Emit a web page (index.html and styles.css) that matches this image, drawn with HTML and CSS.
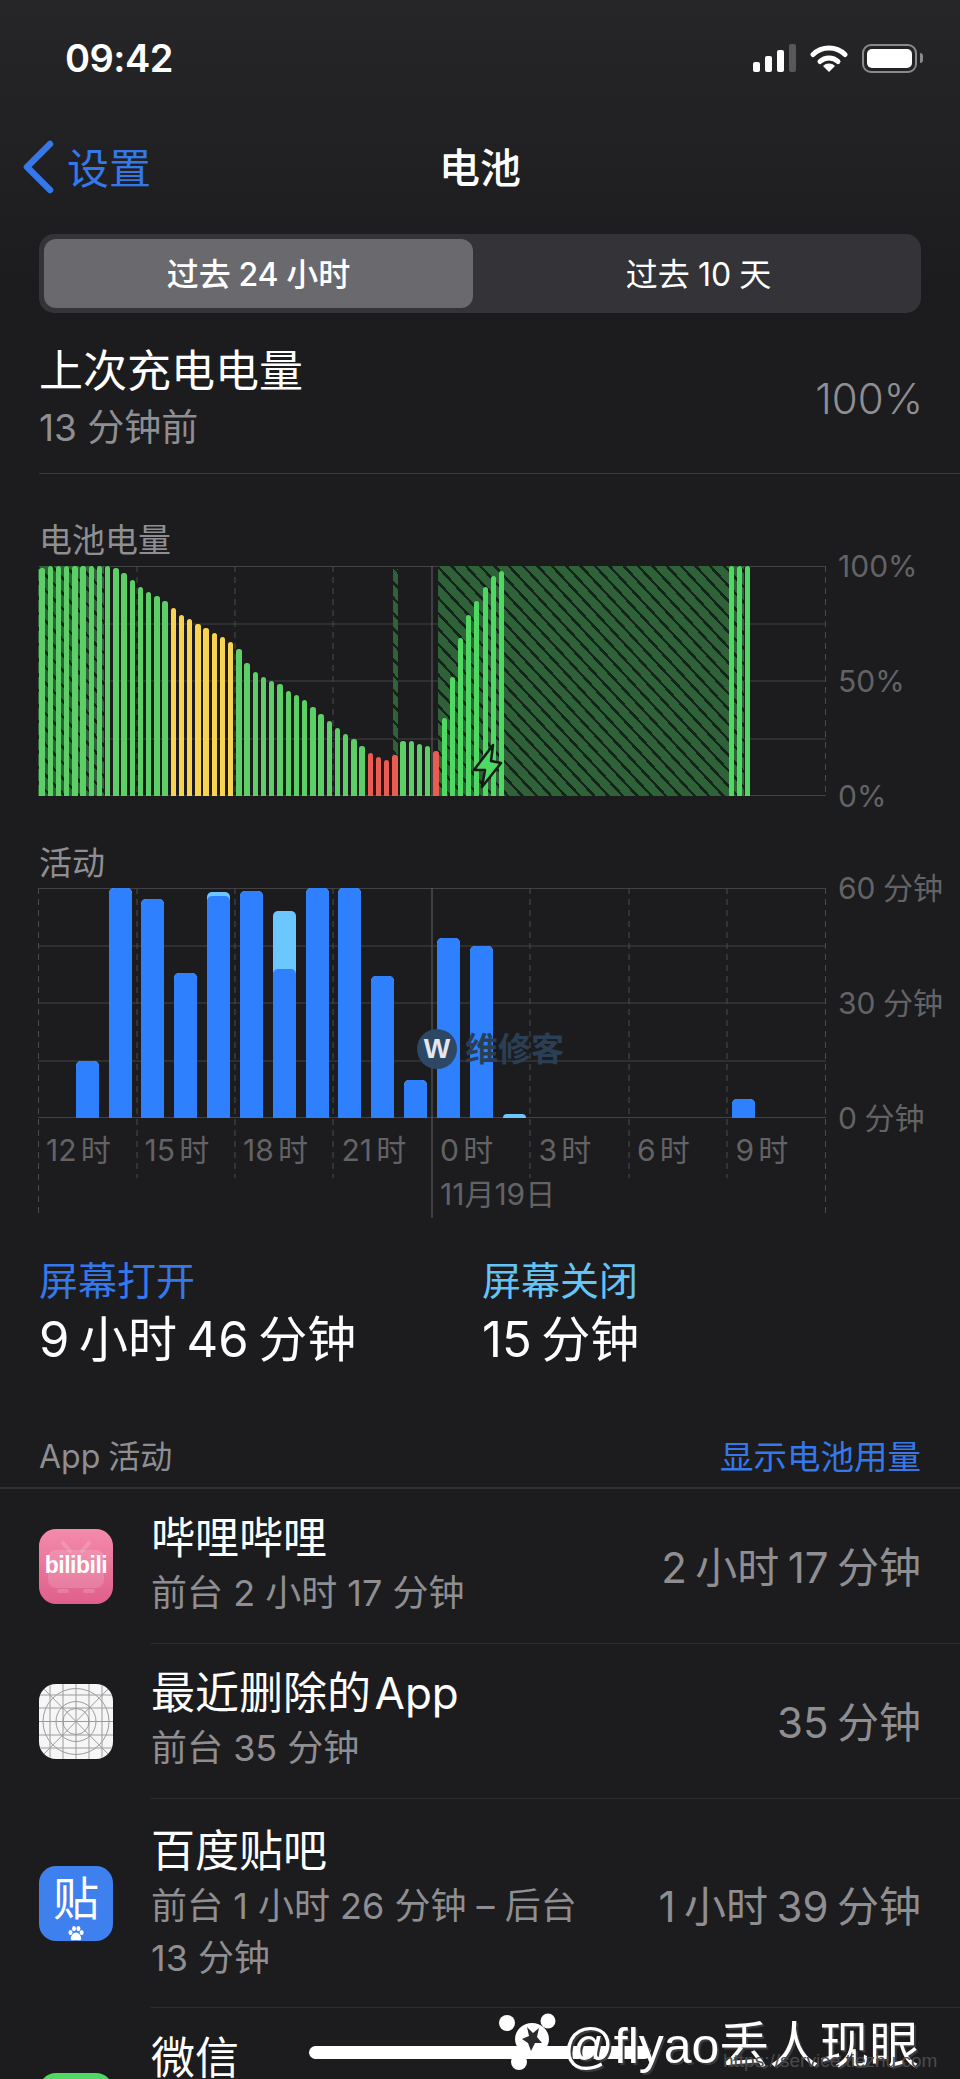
FILE: index.html

```html
<!DOCTYPE html>
<html lang="zh">
<head>
    <title>电池</title>
    <meta charset="UTF-8">
    <meta name="viewport" content="width=device-width, initial-scale=1.0">
    <link rel="stylesheet" href="styles.css">
</head>
<body>
    <div class="screen">
        <div class="status">
            <span class="time">09:42</span>
            <div class="status-icons">
                <svg class="signal" width="44" height="28" viewBox="0 0 44 28">
                    <rect x="1" y="18" width="7" height="10" rx="2" fill="#fff"/>
                    <rect x="13" y="12" width="7" height="16" rx="2" fill="#fff"/>
                    <rect x="25" y="6" width="7" height="22" rx="2" fill="#fff"/>
                    <rect x="37" y="0" width="7" height="28" rx="2" fill="#58585a"/>
                </svg>
                <svg class="wifi" width="38" height="28" viewBox="0 0 38 28">
                    <path d="M3 10.5A23 23 0 0 1 35 10.5" fill="none" stroke="#fff" stroke-width="5" stroke-linecap="round"/>
                    <path d="M10 17.5A13 13 0 0 1 28 17.5" fill="none" stroke="#fff" stroke-width="5" stroke-linecap="round"/>
                    <path d="M19 28L13 22A8.5 8.5 0 0 1 25 22Z" fill="#fff"/>
                </svg>
                <div class="battery"><div class="battery-fill"></div></div>
            </div>
        </div>

        <div class="nav">
            <a class="back">
                <svg width="32" height="54" viewBox="0 0 32 54"><polyline points="28,4 5,27 28,50" fill="none" stroke="#3478ea" stroke-width="6.5" stroke-linecap="round" stroke-linejoin="round"/></svg>
                <span>设置</span>
            </a>
            <div class="nav-title">电池</div>
        </div>

        <div class="segment">
            <div class="segment-item active">过去 24 小时</div>
            <div class="segment-item">过去 10 天</div>
        </div>

        <div class="last-charge">
            <div>
                <div class="last-title">上次充电电量</div>
                <div class="last-sub">13 分钟前</div>
            </div>
            <div class="last-value">100%</div>
        </div>

        <div class="chart-label level-label">电池电量</div>
        <div class="chart-row">
            <div class="plot">
                <svg class="grid-lines" width="788" height="230" viewBox="0 0 788 230">
                    <path d="M0 .5H788M0 58H788M0 115H788M0 173H788M0 229.5H788" stroke="#424244" fill="none"/>
                    <path d="M.5 0V230M99 0V230M197 0V230M295 0V230M492 0V230M591 0V230M689 0V230M787.5 0V230" stroke="#4a4a4c" stroke-dasharray="6 5" fill="none"/>
                    <path d="M394 0V230" stroke="#636366" fill="none"/>
                </svg>
                <div class="hatch hatch-a"></div>
                <div class="hatch hatch-b"></div>
                <div class="hatch hatch-c"></div>
                <div class="level-bars">
                    <i class="g" style="height:228px"></i><i class="g" style="height:230px"></i><i class="g" style="height:230px"></i><i class="g" style="height:230px"></i>
                    <i class="g" style="height:230px"></i><i class="g" style="height:230px"></i><i class="g" style="height:230px"></i><i class="g" style="height:230px"></i>
                    <i class="g" style="height:230px"></i><i class="g" style="height:228px"></i><i class="g" style="height:223px"></i><i class="g" style="height:216px"></i>
                    <i class="g" style="height:209px"></i><i class="g" style="height:204px"></i><i class="g" style="height:200px"></i><i class="g" style="height:195px"></i>
                    <i class="y" style="height:188px"></i><i class="y" style="height:181px"></i><i class="y" style="height:177px"></i><i class="y" style="height:172px"></i>
                    <i class="y" style="height:168px"></i><i class="y" style="height:163px"></i><i class="y" style="height:159px"></i><i class="y" style="height:154px"></i>
                    <i class="g" style="height:147px"></i><i class="g" style="height:133px"></i><i class="g" style="height:124px"></i><i class="g" style="height:119px"></i>
                    <i class="g" style="height:115px"></i><i class="g" style="height:112px"></i><i class="g" style="height:105px"></i><i class="g" style="height:101px"></i>
                    <i class="g" style="height:96px"></i><i class="g" style="height:89px"></i><i class="g" style="height:82px"></i><i class="g" style="height:75px"></i>
                    <i class="g" style="height:68px"></i><i class="g" style="height:62px"></i><i class="g" style="height:57px"></i><i class="g" style="height:50px"></i>
                    <i class="r" style="height:43px"></i><i class="r" style="height:39px"></i><i class="r" style="height:36px"></i><i class="r" style="height:41px"></i>
                    <i class="g" style="height:55px"></i><i class="g" style="height:55px"></i><i class="g" style="height:52px"></i><i class="g" style="height:50px"></i>
                    <i class="r" style="height:45px"></i><i class="c" style="height:78px"></i><i class="c" style="height:119px"></i><i class="c" style="height:158px"></i>
                    <i class="c" style="height:181px"></i><i class="c" style="height:195px"></i><i class="c" style="height:209px"></i><i class="c" style="height:220px"></i>
                    <i class="c" style="height:225px"></i>
                    <i class="c late" style="height:230px"></i><i class="c" style="height:230px"></i><i class="c" style="height:230px"></i>
                </div>
                <svg class="bolt" width="32" height="47" viewBox="0 0 32 47">
                    <polygon points="21,2 2,27 13,27 10,44 29,20 19,18" fill="#4cd964" stroke="#161a17" stroke-width="2.5" stroke-linejoin="round"/>
                </svg>
            </div>
            <div class="axis-right">
                <span>100%</span>
                <span>50%</span>
                <span>0%</span>
            </div>
        </div>

        <div class="chart-label activity-label">活动</div>
        <div class="chart-row">
            <div class="plot">
                <svg class="grid-lines" width="788" height="330" viewBox="0 0 788 330">
                    <path d="M0 .5H788M0 58H788M0 115H788M0 173H788M0 229.5H788" stroke="#424244" fill="none"/>
                    <path d="M.5 0V330M787.5 0V330M99 0V290M197 0V290M295 0V290M492 0V290M591 0V290M689 0V290" stroke="#4a4a4c" stroke-dasharray="6 5" fill="none"/>
                    <path d="M394 0V330" stroke="#636366" fill="none"/>
                </svg>
                <div class="activity-bars">
                    <div class="hour first" style="height:57px"><i style="height:100%"></i></div>
                    <div class="hour" style="height:230px"><i style="height:100%"></i></div>
                    <div class="hour" style="height:219px"><i style="height:100%"></i></div>
                    <div class="hour" style="height:145px"><i style="height:100%"></i></div>
                    <div class="hour" style="height:226px"><i style="height:222px"></i></div>
                    <div class="hour" style="height:227px"><i style="height:100%"></i></div>
                    <div class="hour" style="height:207px"><i style="height:149px"></i></div>
                    <div class="hour" style="height:230px"><i style="height:100%"></i></div>
                    <div class="hour" style="height:230px"><i style="height:100%"></i></div>
                    <div class="hour" style="height:142px"><i style="height:100%"></i></div>
                    <div class="hour" style="height:38px"><i style="height:100%"></i></div>
                    <div class="hour" style="height:180px"><i style="height:100%"></i></div>
                    <div class="hour" style="height:172px"><i style="height:100%"></i></div>
                    <div class="hour" style="height:4px"></div>
                    <div class="hour morning" style="height:19px"><i style="height:100%"></i></div>
                </div>
                <div class="axis-bottom">
                    <span>12 时</span>
                    <span>15 时</span>
                    <span>18 时</span>
                    <span>21 时</span>
                    <span>0 时<br>11月19日</span>
                    <span>3 时</span>
                    <span>6 时</span>
                    <span>9 时</span>
                </div>
                <div class="site-mark">
                    <div class="site-logo">W</div>
                    <div class="site-name">维修客</div>
                </div>
            </div>
            <div class="axis-right activity-axis">
                <span>60 分钟</span>
                <span>30 分钟</span>
                <span>0 分钟</span>
            </div>
        </div>

        <div class="totals">
            <div>
                <div class="total-label on">屏幕打开</div>
                <div class="total-value">9 小时 46 分钟</div>
            </div>
            <div>
                <div class="total-label off">屏幕关闭</div>
                <div class="total-value">15 分钟</div>
            </div>
        </div>

        <div class="app-header">
            <span>App 活动</span>
            <a>显示电池用量</a>
        </div>

        <div class="app-row">
            <div class="app-icon icon-bili">
                <svg width="74" height="75" viewBox="0 0 74 75">
                    <path d="M24 14L31 22M50 14L43 22" stroke="#fff" stroke-opacity=".16" stroke-width="4" stroke-linecap="round"/>
                    <rect x="9" y="21" width="56" height="38" rx="8" fill="#fff" fill-opacity=".14"/>
                    <path d="M20 62H28M46 62H54" stroke="#fff" stroke-opacity=".16" stroke-width="4" stroke-linecap="round"/>
                </svg>
                <span>bilibili</span>
            </div>
            <div class="app-body">
                <div class="app-info">
                    <div class="app-name">哔哩哔哩</div>
                    <div class="app-sub">前台 2 小时 17 分钟</div>
                </div>
                <div class="app-time">2 小时 17 分钟</div>
            </div>
        </div>

        <div class="app-row">
            <div class="app-icon icon-blank">
                <svg width="74" height="75" viewBox="0 0 74 75">
                    <path d="M0 0L74 75M74 0L0 75M0 11H74M0 24H74M0 37.5H74M0 51H74M0 64H74M11 0V75M24 0V75M37 0V75M50 0V75M63 0V75" stroke="#9b9b9d" fill="none"/>
                    <circle cx="37" cy="37.5" r="33" stroke="#9b9b9d" fill="none"/>
                    <circle cx="37" cy="37.5" r="20" stroke="#9b9b9d" fill="none"/>
                    <circle cx="37" cy="37.5" r="13" stroke="#9b9b9d" fill="none"/>
                </svg>
            </div>
            <div class="app-body">
                <div class="app-info">
                    <div class="app-name">最近删除的 App</div>
                    <div class="app-sub">前台 35 分钟</div>
                </div>
                <div class="app-time">35 分钟</div>
            </div>
        </div>

        <div class="app-row two-line">
            <div class="app-icon icon-tieba">
                <span>贴</span>
                <svg width="16" height="15" viewBox="0 0 16 15">
                    <ellipse cx="2.5" cy="6.5" rx="2" ry="2.6" fill="#fff"/>
                    <ellipse cx="6" cy="2.6" rx="2" ry="2.6" fill="#fff"/>
                    <ellipse cx="10.4" cy="2.6" rx="2" ry="2.6" fill="#fff"/>
                    <ellipse cx="13.6" cy="6.5" rx="2" ry="2.6" fill="#fff"/>
                    <path d="M8 6.5C11 6.5 14 11 13 13.4C12 15 10 14 8 14S4 15 3 13.4C2 11 5 6.5 8 6.5Z" fill="#fff"/>
                </svg>
            </div>
            <div class="app-body">
                <div class="app-info">
                    <div class="app-name">百度贴吧</div>
                    <div class="app-sub">前台 1 小时 26 分钟 – 后台 <span class="nowrap">13 分钟</span></div>
                </div>
                <div class="app-time">1 小时 39 分钟</div>
            </div>
        </div>

        <div class="app-row last">
            <div class="app-icon icon-wechat"></div>
            <div class="app-body">
                <div class="app-info">
                    <div class="app-name">微信</div>
                </div>
            </div>
        </div>

        <div class="home-bar"></div>

        <div class="credit">
            <svg class="credit-logo" width="58" height="58" viewBox="0 0 58 58">
                <circle cx="9" cy="10" r="8" fill="#fff"/>
                <circle cx="50" cy="8" r="7.5" fill="#fff"/>
                <circle cx="21" cy="49" r="8" fill="#fff"/>
                <ellipse cx="34" cy="26" rx="17" ry="16" fill="#fff"/>
                <path d="M29 14L35 20L41 15L39 24L44 30L37 30L33 38L30 30L24 26L31 23Z" fill="#2a2a2c"/>
            </svg>
            <span class="credit-name">@flyao丢人现眼</span>
            <span class="credit-url">https://service.tiezhu.com</span>
        </div>
    </div>
</body>
</html>
```

FILE: styles.css

```css
* { box-sizing: border-box; }

body {
    margin: 0;
    background: #1c1c1e;
    font-family: Inter, "Noto Sans CJK SC", sans-serif;
    word-spacing: -0.06em;
    color: #fff;
}
.screen {
    position: relative;
    width: 960px;
    height: 2079px;
    overflow: hidden;
    background: linear-gradient(180deg, #262628 0, #1c1c1e 290px);
}
.nowrap { white-space: nowrap; }

/* status bar */
.status {
    height: 116px;
    padding: 0 37px 0 65px;
    display: flex;
    align-items: center;
    justify-content: space-between;
}
.time { font-size: 38px; font-weight: 600; letter-spacing: -0.5px; }
.status-icons { display: flex; align-items: center; }
.signal { margin-right: 14px; }
.wifi { margin-right: 14px; }
.battery {
    position: relative;
    width: 55px;
    height: 29px;
    margin-right: 6px;
    padding: 3px;
    border: 2px solid #8a8a8c;
    border-radius: 9px;
}
.battery::after {
    content: "";
    position: absolute;
    top: 7px;
    right: -8px;
    width: 3px;
    height: 10px;
    background: #8a8a8c;
    border-radius: 0 3px 3px 0;
}
.battery-fill { height: 100%; background: #fff; border-radius: 5px; }

/* nav */
.nav {
    position: relative;
    height: 104px;
    padding-bottom: 6px;
    display: flex;
    align-items: center;
    justify-content: center;
}
.back {
    position: absolute;
    left: 22px;
    top: 22px;
    display: flex;
    align-items: center;
    gap: 13px;
    color: #3478ea;
    font-size: 42px;
}
.back span { margin-top: -3px; }
.nav-title { font-size: 41px; font-weight: 500; }

/* segmented control */
.segment {
    margin: 14px 39px 0;
    height: 79px;
    padding: 5px;
    display: grid;
    grid-template-columns: 429px 1fr;
    background: #333338;
    border-radius: 15px;
}
.segment-item {
    display: flex;
    align-items: center;
    justify-content: center;
    padding: 0 0 4px 8px;
    font-size: 32px;
    border-radius: 12px;
}
.segment-item.active { padding-left: 0; background: #69696e; font-weight: 500; }

/* last charge */
.last-charge {
    margin-left: 39px;
    padding: 28px 37px 18px 0;
    display: flex;
    align-items: center;
    justify-content: space-between;
    border-bottom: 1px solid #38383a;
}
.last-title { font-size: 44px; line-height: 60px; }
.last-sub { font-size: 37px; line-height: 54px; word-spacing: 0; color: #8e8e93; }
.last-value { font-size: 42px; font-weight: 300; color: #8e8e93; }

/* charts */
.chart-label {
    margin-left: 39px;
    font-size: 33px;
    line-height: 48px;
    color: #8e8e93;
}
.level-label { padding-top: 42px; height: 92px; }
.activity-label { margin-top: 23px; margin-bottom: 1px; }
.chart-row { display: flex; margin-left: 38px; }
.plot { position: relative; width: 788px; height: 230px; }
.grid-lines { position: absolute; top: 0; left: 0; }
.hatch {
    position: absolute;
    bottom: 0;
    height: 230px;
    background: repeating-linear-gradient(47deg, #2f6239 0, #2f6239 8px, #14241a 8px, #14241a 10.5px);
}
.hatch-a { left: 0; width: 66px; }
.hatch-b { left: 355px; width: 5px; height: 227px; }
.hatch-c { left: 400px; width: 306px; }
.level-bars {
    position: relative;
    height: 230px;
    display: grid;
    grid-template-columns: repeat(96, 8.208px);
    align-items: end;
    justify-items: center;
}
.level-bars i { display: block; width: 5.4px; border-radius: 2.5px 2.5px 0 0; }
.level-bars .g { background: #5ccf66; }
.level-bars .c { width: 5px; background: #4fd862; }
.level-bars .y { background: #f8d34f; }
.level-bars .r { background: #ec5b50; }
.level-bars .late { grid-column: 85; }
.bolt { position: absolute; left: 434px; top: 177px; }

.axis-right {
    height: 270px;
    margin: -20px 0 0 12px;
    display: flex;
    flex-direction: column;
    justify-content: space-between;
    font-size: 30px;
    line-height: 40px;
    color: #636366;
}
.activity-axis { white-space: nowrap; }

.activity-bars {
    position: relative;
    height: 230px;
    display: grid;
    grid-template-columns: repeat(24, 32.833px);
    align-items: end;
    justify-items: center;
}
.hour {
    width: 23px;
    display: flex;
    align-items: flex-end;
    background: #6cc6ff;
    border-radius: 5px 5px 0 0;
    overflow: hidden;
}
.hour i { display: block; width: 100%; background: #2f80ff; border-radius: 5px 5px 0 0; }
.hour.first { grid-column: 2; }
.hour.morning { grid-column: 22; }

.axis-bottom {
    position: relative;
    height: 100px;
    padding-top: 10px;
    display: grid;
    grid-template-columns: repeat(8, 98.5px);
    font-size: 30px;
    line-height: 44px;
    word-spacing: -0.14em;
    color: #636366;
    white-space: nowrap;
}
.axis-bottom span { padding-left: 8px; }

.site-mark {
    position: absolute;
    left: 379px;
    top: 141px;
    display: flex;
    align-items: center;
    gap: 8px;
}
.site-logo {
    width: 40px;
    height: 40px;
    display: flex;
    align-items: center;
    justify-content: center;
    border-radius: 50%;
    background: #2d4864;
    color: #e4e8ee;
    font: bold 28px "Liberation Sans", sans-serif;
}
.site-name { font-size: 33px; font-weight: 700; line-height: 40px; color: #2b3f54; }

/* totals */
.totals {
    margin: 118px 0 0 39px;
    display: grid;
    grid-template-columns: 443px 1fr;
}
.total-label { font-size: 39px; line-height: 50px; }
.total-label.on { color: #3478ea; }
.total-label.off { color: #64c4f5; }
.total-value { font-size: 49px; line-height: 68px; word-spacing: -0.085em; }

/* app list */
.app-header {
    margin-top: 60px;
    padding: 0 39px 7px;
    display: flex;
    justify-content: space-between;
    font-size: 32px;
    line-height: 46px;
    color: #8e8e93;
    border-bottom: 2px solid #303032;
}
.app-header a { font-size: 33.5px; color: #3478ea; }
.app-row {
    display: flex;
    align-items: stretch;
    padding-left: 39px;
}
.app-icon {
    flex: none;
    position: relative;
    align-self: center;
    width: 74px;
    height: 75px;
    border-radius: 17px;
    overflow: hidden;
}
.icon-bili { background: linear-gradient(180deg, #f48bab, #df5f8b); }
.icon-bili svg { position: absolute; top: 0; left: 0; }
.icon-bili span {
    position: absolute;
    left: 0;
    right: 0;
    top: 23px;
    text-align: center;
    font: bold 23px "Liberation Sans", sans-serif;
    letter-spacing: -0.5px;
    color: #fff;
}
.icon-blank { background: #f6f6f6; }
.icon-tieba {
    display: flex;
    flex-direction: column;
    align-items: center;
    background: #3f80ef;
}
.icon-tieba span { font-size: 46px; line-height: 56px; margin-top: 4px; }
.icon-wechat { background: #4cd964; }
.app-body {
    flex: 1;
    margin-left: 38px;
    padding: 20px 39px 24px 0;
    display: flex;
    align-items: center;
    justify-content: space-between;
    gap: 24px;
    border-bottom: 1px solid #2f2f31;
}
.two-line .app-body { padding: 23px 39px 23px 0; }
.last .app-body { padding: 21px 39px 0 0; border-bottom: 0; align-items: flex-start; }
.last .app-info { min-height: 183px; }
.app-name { font-size: 44px; line-height: 58px; word-spacing: -0.2em; }
.app-sub { font-size: 36px; line-height: 52px; word-spacing: 0; color: #8e8e93; }
.app-time { flex: none; font-size: 42px; word-spacing: -0.08em; color: #8e8e93; white-space: nowrap; }

/* overlays */
.home-bar {
    position: absolute;
    left: 309px;
    top: 2046px;
    width: 342px;
    height: 13px;
    background: #fff;
    border-radius: 7px;
}
.credit { position: absolute; left: 0; top: 0; }
.credit-logo { position: absolute; left: 498px; top: 2013px; }
.credit-name {
    position: absolute;
    left: 563px;
    top: 2014px;
    font: 50px/64px "Liberation Sans", "Noto Sans CJK SC", sans-serif;
    color: #fff;
    white-space: nowrap;
    text-shadow: 2px 2px 0 #3a3a3a;
}
.credit-url {
    position: absolute;
    left: 723px;
    top: 2048px;
    font: 19px/26px "Liberation Sans", sans-serif;
    color: #4a4a4c;
    white-space: nowrap;
}
```
